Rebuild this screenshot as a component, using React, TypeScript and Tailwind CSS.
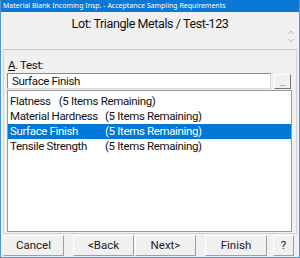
import React from 'react';

const items = [
  { name: 'Flatness', tabbed: false },
  { name: 'Material Hardness', tabbed: true },
  { name: 'Surface Finish', tabbed: true, selected: true },
  { name: 'Tensile Strength', tabbed: true },
];

function WizButton({ label, className }: { label: string; className: string }) {
  return (
    <div
      className={`h-[21px] flex items-center justify-center bg-[#f0f0f0] border-t border-l border-t-white border-l-white border-r border-b border-r-[#a0a0a0] border-b-[#a0a0a0] text-[11.5px] text-[#1a1a1a] ${className}`}
    >
      {label}
    </div>
  );
}

export default function App() {
  return (
    <div
      className="w-[300px] h-[258px] bg-[#f0f0f0] border-x border-b border-[#4a98db] flex flex-col overflow-hidden"
      style={{ fontFamily: 'Roboto, "Noto Sans", sans-serif' }}
    >
      {/* Title bar */}
      <div
        className="h-[12px] bg-[#0a78d4] text-white text-[7px] leading-[12px] pl-[2px] whitespace-nowrap"
        style={{ fontFamily: '"Noto Sans", sans-serif' }}
      >
        Material Blank Incoming Insp. - Acceptance Sampling Requirements
      </div>

      {/* Header */}
      <div className="h-[37px] relative flex justify-center pt-[3px]">
        <div className="text-[12.5px] leading-[18px] tracking-[-0.4px] text-[#111]">
          Lot: Triangle Metals / Test-123
        </div>
        <div className="absolute right-[5px] top-[18px] flex flex-col gap-[3px] text-[#b8b8b8]">
          <svg width="6" height="5" viewBox="0 0 6 5">
            <path d="M0.5 4 L3 1 L5.5 4" fill="none" stroke="currentColor" strokeWidth="1" />
          </svg>
          <svg width="6" height="5" viewBox="0 0 6 5">
            <path d="M0.5 1 L3 4 L5.5 1" fill="none" stroke="currentColor" strokeWidth="1" />
          </svg>
        </div>
      </div>

      {/* Panel */}
      <div className="mx-[2px] h-[185px] border border-[#d4d4d4] border-t-[#c8c8c8] flex flex-col pl-[3px] pr-[4px] pt-[8px] tracking-[-0.35px]">
        <div className="text-[11.5px] leading-[14px] text-[#111] pl-[1px]">
          <span className="underline">A</span>. Test:
        </div>
        <div className="mt-[1px] flex items-center">
          <div className="w-[264px] h-[16px] bg-white border border-[#8a8a8a] border-b-[#d8d8d8] border-r-[#d8d8d8] text-[11.5px] leading-[14px] pl-[4px] text-[#111]">
            Surface Finish
          </div>
          <div className="ml-[3px] w-[17px] h-[15px] bg-[#f0f0f0] border border-t-white border-l-white border-r-[#777] border-b-[#777] flex items-end justify-center text-[9px] leading-[10px] tracking-normal text-[#222]">
            ...
          </div>
        </div>
        <div className="mt-[1px] h-[142px] bg-white border border-[#9a9a9a] pt-[3px]">
          {items.map((it) => (
            <div
              key={it.name}
              className={`h-[15px] flex items-center text-[11.5px] leading-[15px] pl-[2px] whitespace-nowrap ${
                it.selected ? 'bg-[#0078d7] text-white' : 'text-[#111]'
              }`}
            >
              {it.tabbed ? (
                <span className="w-[95px]">{it.name}</span>
              ) : (
                <span className="mr-[8px]">{it.name}</span>
              )}
              <span>(5 Items Remaining)</span>
            </div>
          ))}
        </div>
      </div>

      {/* Buttons */}
      <div className="flex mt-[1px] pl-[2px]">
        <WizButton label="Cancel" className="w-[61px]" />
        <WizButton label="<Back" className="w-[61px] ml-[9px]" />
        <WizButton label="Next>" className="w-[61px] ml-[1px]" />
        <WizButton label="Finish" className="w-[62px] ml-[9px]" />
        <WizButton label="?" className="w-[21px] ml-[6px]" />
      </div>
    </div>
  );
}
